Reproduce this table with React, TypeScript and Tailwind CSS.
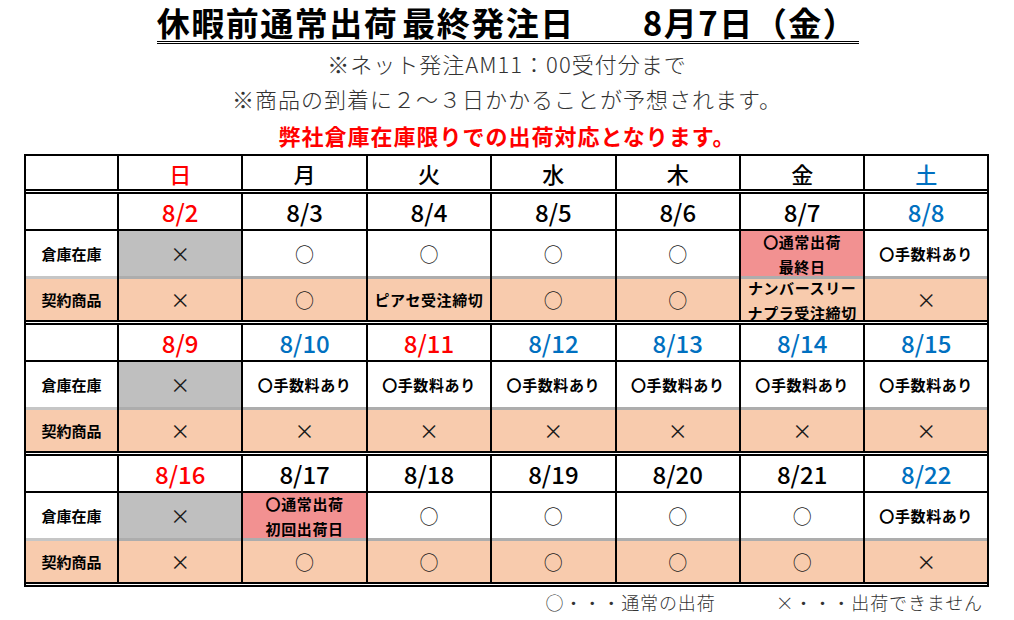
import React from "react";

type Cell =
  | { t: "o"; bg?: string }
  | { t: "x"; bg?: string }
  | { t: "fee"; bg?: string }
  | { t: "lines"; lines: string[]; bg?: string };

const ROW =
  "grid grid-cols-[91px_repeat(6,122.4px)_1fr] grid-rows-[minmax(0,1fr)] gap-x-[2px] bg-black";

const O: Cell = { t: "o" };
const X: Cell = { t: "x" };
const XG: Cell = { t: "x", bg: "bg-[#bfbfbf]" };
const FEE: Cell = { t: "fee" };

type Block = {
  dates: { d: string; c: string }[];
  stock: Cell[];
  contract: Cell[];
};

const RED = "text-[#ff0000]";
const BLUE = "text-[#0070c0]";
const BLACK = "text-black";

const blocks: Block[] = [
  {
    dates: [
      { d: "8/2", c: RED },
      { d: "8/3", c: BLACK },
      { d: "8/4", c: BLACK },
      { d: "8/5", c: BLACK },
      { d: "8/6", c: BLACK },
      { d: "8/7", c: BLACK },
      { d: "8/8", c: BLUE },
    ],
    stock: [
      XG,
      O,
      O,
      O,
      O,
      { t: "lines", lines: ["〇通常出荷", "最終日"], bg: "bg-[#f29191]" },
      FEE,
    ],
    contract: [
      X,
      O,
      { t: "lines", lines: ["ピアセ受注締切"] },
      O,
      O,
      { t: "lines", lines: ["ナンバースリー", "ナプラ受注締切"] },
      X,
    ],
  },
  {
    dates: [
      { d: "8/9", c: RED },
      { d: "8/10", c: BLUE },
      { d: "8/11", c: RED },
      { d: "8/12", c: BLUE },
      { d: "8/13", c: BLUE },
      { d: "8/14", c: BLUE },
      { d: "8/15", c: BLUE },
    ],
    stock: [XG, FEE, FEE, FEE, FEE, FEE, FEE],
    contract: [X, X, X, X, X, X, X],
  },
  {
    dates: [
      { d: "8/16", c: RED },
      { d: "8/17", c: BLACK },
      { d: "8/18", c: BLACK },
      { d: "8/19", c: BLACK },
      { d: "8/20", c: BLACK },
      { d: "8/21", c: BLACK },
      { d: "8/22", c: BLUE },
    ],
    stock: [
      XG,
      { t: "lines", lines: ["〇通常出荷", "初回出荷日"], bg: "bg-[#f29191]" },
      O,
      O,
      O,
      O,
      FEE,
    ],
    contract: [X, O, O, O, O, O, X],
  },
];

function CellContent({ cell }: { cell: Cell }) {
  if (cell.t === "o")
    return <span className="text-[19px] leading-none text-[#1a1a1a]">○</span>;
  if (cell.t === "x")
    return <span className="text-[20px] leading-none text-[#1a1a1a]">×</span>;
  if (cell.t === "fee")
    return (
      <span className="text-[15px] font-bold leading-none tracking-[0.6px] text-black">
        〇手数料あり
      </span>
    );
  return (
    <div className="text-center text-[15px] font-bold leading-[25px] tracking-[0.6px] text-black whitespace-nowrap">
      {cell.lines.map((l) => (
        <div key={l}>{l}</div>
      ))}
    </div>
  );
}

function DoubleLine() {
  return <div className="relative z-10 h-[5px] border-y-2 border-black bg-white" />;
}

const days = [
  { d: "日", c: RED },
  { d: "月", c: BLACK },
  { d: "火", c: BLACK },
  { d: "水", c: BLACK },
  { d: "木", c: BLACK },
  { d: "金", c: BLACK },
  { d: "土", c: BLUE },
];

export default function App() {
  return (
    <div className="w-[1014px] h-[620px] overflow-hidden bg-white font-['Noto_Sans_CJK_JP',sans-serif]">
      {/* Title */}
      <div className="flex justify-center pt-[4px]">
        <div className="inline-block ml-[2px] pr-[2px] border-b-[3px] border-double border-black text-[33px] font-bold leading-[37px] tracking-[1.5px] text-black whitespace-nowrap">
          <span>休暇前通常出荷</span>
          <span className="ml-[4px]">最終発注日</span>
          <span className="ml-[68px]">8月7日（金）</span>
        </div>
      </div>
      <div className="mt-[2px] text-center text-[22px] font-light leading-[35px] tracking-[1px] text-[#333333] whitespace-nowrap">
        ※ネット発注AM11：00受付分まで
      </div>
      <div className="text-center text-[22px] font-light leading-[35px] tracking-[1px] text-[#333333] whitespace-nowrap">
        ※商品の到着に２～３日かかることが予想されます。
      </div>
      <div className="text-center text-[22px] font-bold leading-[38px] tracking-[1px] text-[#ff0000] whitespace-nowrap">
        弊社倉庫在庫限りでの出荷対応となります。
      </div>

      {/* Table */}
      <div className="ml-[24px] w-[965px] border-x-2 border-t-2 border-black">
        <div className={`${ROW} h-[33px]`}>
          <div className="bg-white" />
          {days.map((d) => (
            <div
              key={d.d}
              className={`flex items-center justify-center bg-white text-[22px] font-medium leading-none ${d.c}`}
            >
              {d.d}
            </div>
          ))}
        </div>
        <DoubleLine />
        {blocks.map((b, bi) => (
          <div key={bi}>
            <div className={`${ROW} h-[35px]`}>
              <div className="bg-white" />
              {b.dates.map((d) => (
                <div
                  key={d.d}
                  className={`flex items-center justify-center bg-white text-[24px] font-medium leading-none ${d.c}`}
                >
                  {d.d}
                </div>
              ))}
            </div>
            <div className="h-[2px] bg-black" />
            <div className={`${ROW} h-[48px]`}>
              <div className="flex items-center justify-center border-b-[3px] border-[#c6c6c6] bg-white text-[15px] font-bold leading-none text-black">
                倉庫在庫
              </div>
              {b.stock.map((c, i) => (
                <div
                  key={i}
                  className={`flex items-center justify-center border-b-[3px] border-[#adadad] ${c.bg ?? "bg-white"}`}
                >
                  <CellContent cell={c} />
                </div>
              ))}
            </div>
            <div className={`${ROW} h-[41px]`}>
              <div className="flex items-center justify-center bg-[#f8cbad] text-[15px] font-bold leading-none text-black">
                契約商品
              </div>
              {b.contract.map((c, i) => (
                <div
                  key={i}
                  className={`flex items-center justify-center ${c.bg ?? "bg-[#f8cbad]"}`}
                >
                  <CellContent cell={c} />
                </div>
              ))}
            </div>
            <DoubleLine />
          </div>
        ))}
      </div>

      {/* Legend */}
      <div className="ml-[24px] flex w-[965px] justify-end gap-[60px] pr-[6px] text-[18px] font-light leading-[30px] tracking-[0.9px] text-[#333333] whitespace-nowrap">
        <span>○・・・通常の出荷</span>
        <span>×・・・出荷できません</span>
      </div>
    </div>
  );
}
